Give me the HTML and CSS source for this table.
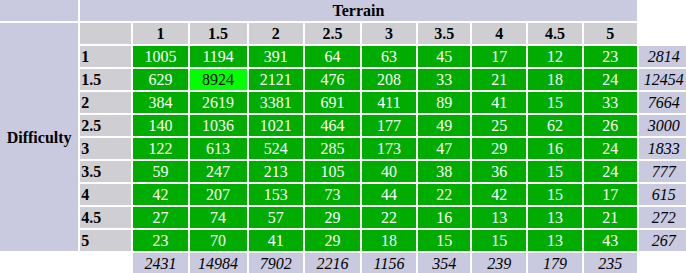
FILE: index.html
```html
<!DOCTYPE html>
<html>
<head>
<meta charset="utf-8">
<link rel="stylesheet" href="styles.css">
</head>
<body>
<table class="grid">
<colgroup>
<col class="c-diff"><col class="c-lab"><col class="c-w54"><col class="c-w57"><col class="c-w54"><col class="c-w55"><col class="c-w54"><col class="c-w52"><col class="c-w54"><col class="c-w53"><col class="c-w53"><col class="c-tot">
</colgroup>
<tr>
<td class="lav"></td>
<th class="lav" colspan="10">Terrain</th>
<td class="blank"></td>
</tr>
<tr>
<th class="lav" rowspan="10">Difficulty</th>
<th class="grey"></th>
<th class="grey">1</th><th class="grey">1.5</th><th class="grey">2</th><th class="grey">2.5</th><th class="grey">3</th><th class="grey">3.5</th><th class="grey">4</th><th class="grey">4.5</th><th class="grey">5</th>
<td class="blank"></td>
</tr>
<tr><th class="grey lab">1</th><td class="g">1005</td><td class="g">1194</td><td class="g">391</td><td class="g">64</td><td class="g">63</td><td class="g">45</td><td class="g">17</td><td class="g">12</td><td class="g">23</td><td class="tot">2814</td></tr>
<tr><th class="grey lab">1.5</th><td class="g">629</td><td class="hi">8924</td><td class="g">2121</td><td class="g">476</td><td class="g">208</td><td class="g">33</td><td class="g">21</td><td class="g">18</td><td class="g">24</td><td class="tot">12454</td></tr>
<tr><th class="grey lab">2</th><td class="g">384</td><td class="g">2619</td><td class="g">3381</td><td class="g">691</td><td class="g">411</td><td class="g">89</td><td class="g">41</td><td class="g">15</td><td class="g">33</td><td class="tot">7664</td></tr>
<tr><th class="grey lab">2.5</th><td class="g">140</td><td class="g">1036</td><td class="g">1021</td><td class="g">464</td><td class="g">177</td><td class="g">49</td><td class="g">25</td><td class="g">62</td><td class="g">26</td><td class="tot">3000</td></tr>
<tr><th class="grey lab">3</th><td class="g">122</td><td class="g">613</td><td class="g">524</td><td class="g">285</td><td class="g">173</td><td class="g">47</td><td class="g">29</td><td class="g">16</td><td class="g">24</td><td class="tot">1833</td></tr>
<tr><th class="grey lab">3.5</th><td class="g">59</td><td class="g">247</td><td class="g">213</td><td class="g">105</td><td class="g">40</td><td class="g">38</td><td class="g">36</td><td class="g">15</td><td class="g">24</td><td class="tot">777</td></tr>
<tr><th class="grey lab">4</th><td class="g">42</td><td class="g">207</td><td class="g">153</td><td class="g">73</td><td class="g">44</td><td class="g">22</td><td class="g">42</td><td class="g">15</td><td class="g">17</td><td class="tot">615</td></tr>
<tr><th class="grey lab">4.5</th><td class="g">27</td><td class="g">74</td><td class="g">57</td><td class="g">29</td><td class="g">22</td><td class="g">16</td><td class="g">13</td><td class="g">13</td><td class="g">21</td><td class="tot">272</td></tr>
<tr><th class="grey lab">5</th><td class="g">23</td><td class="g">70</td><td class="g">41</td><td class="g">29</td><td class="g">18</td><td class="g">15</td><td class="g">15</td><td class="g">13</td><td class="g">43</td><td class="tot">267</td></tr>
<tr><td class="blank"></td><td class="blank"></td><td class="tot">2431</td><td class="tot">14984</td><td class="tot">7902</td><td class="tot">2216</td><td class="tot">1156</td><td class="tot">354</td><td class="tot">239</td><td class="tot">179</td><td class="tot">235</td><td class="blank"></td></tr>
</table>
</body>
</html>
```
FILE: styles.css
```css
html, body {
  margin: 0;
  padding: 0;
  background: #ffffff;
  overflow: hidden;
}
.grid {
  margin: -2px 0 0 -2px;
  border-collapse: separate;
  border-spacing: 2px;
  table-layout: fixed;
  width: 693px;
  font-family: "Liberation Serif", "Times New Roman", serif;
  font-size: 16px;
  color: #000;
}
.c-diff { width: 78px; }
.c-lab { width: 51px; }
.c-w52 { width: 52px; }
.c-w53 { width: 53px; }
.c-w54 { width: 54px; }
.c-w55 { width: 55px; }
.c-w57 { width: 57px; }
.c-tot { width: 50px; }
.grid td, .grid th {
  padding: 1px;
  height: 21px;
  box-sizing: border-box;
  line-height: 19px;
  text-align: center;
  white-space: nowrap;
}
.grid th { font-weight: bold; }
.lav { background: #c9cadf; }
.grey { background: #cfcfd3; }
.lab { text-align: left !important; }
.g { background: #00ac00; color: #ffffff; }
.hi { background: #00ff00; color: #000000; }
.tot { background: #c9cadf; font-style: italic; }
.blank { background: transparent; }
```
